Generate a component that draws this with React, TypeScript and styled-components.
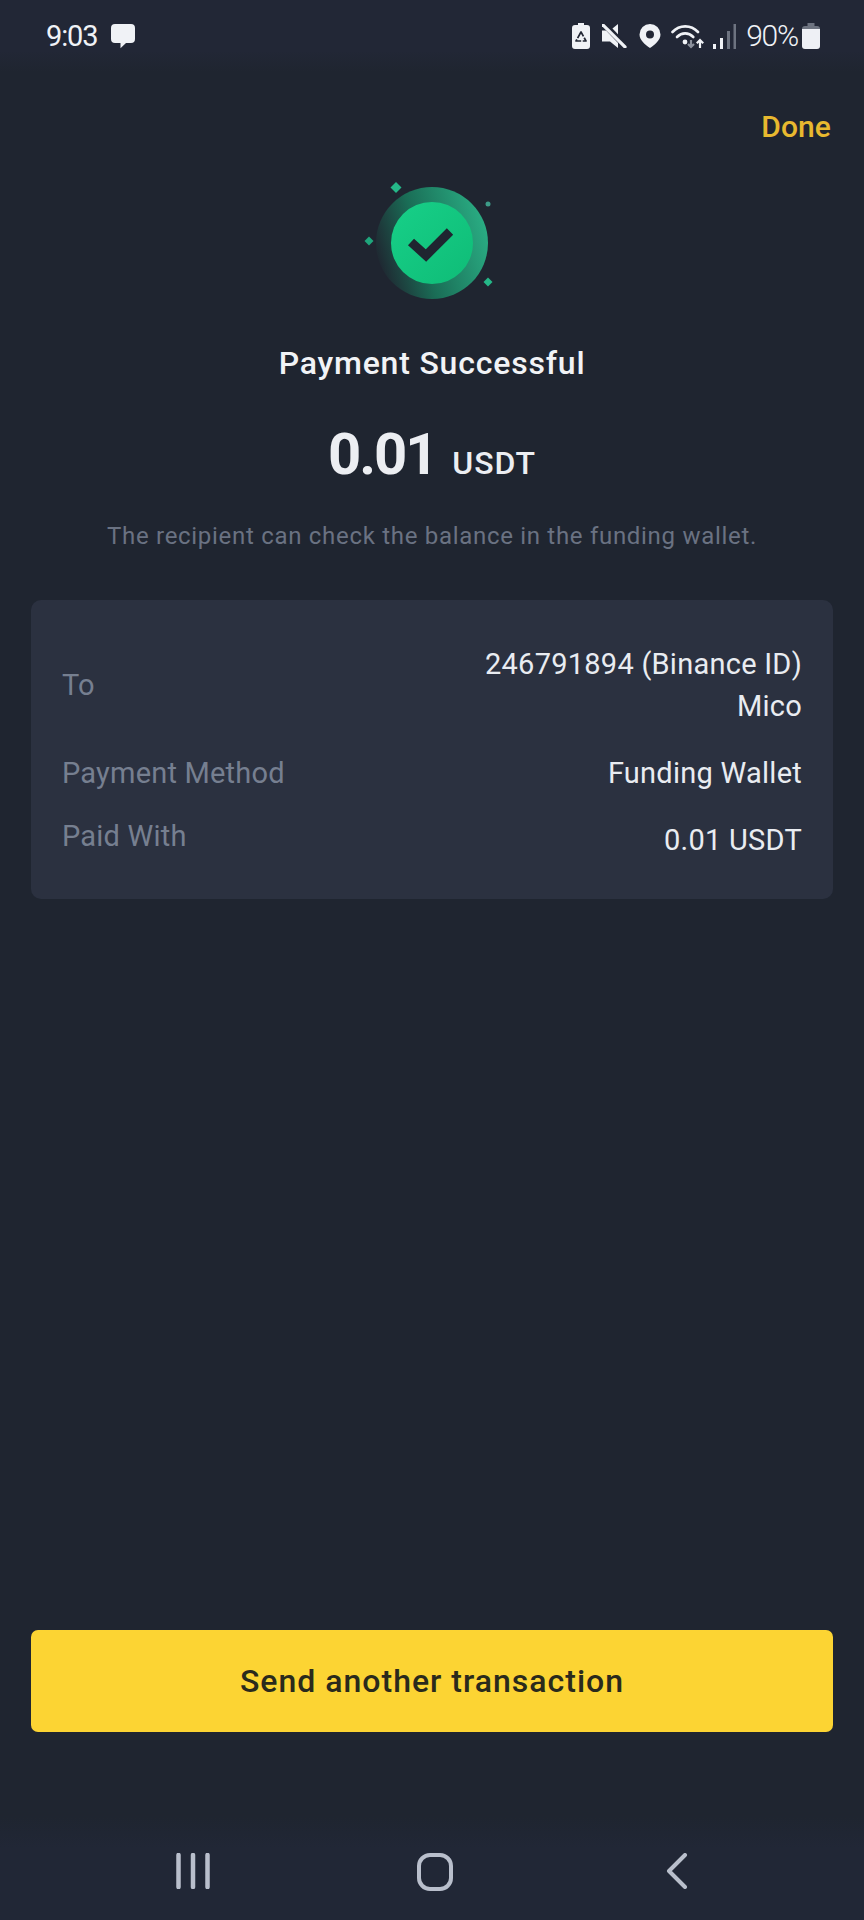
import styled, { createGlobalStyle } from 'styled-components';

const GlobalStyle = createGlobalStyle`
  html, body {
    margin: 0;
    padding: 0;
    background: #1f2530;
  }
  * {
    box-sizing: border-box;
  }
`;

const Page = styled.div`
  width: 864px;
  height: 1920px;
  display: flex;
  flex-direction: column;
  background: #1f2530;
  font-family: Roboto, 'Noto Sans', sans-serif;
  overflow: hidden;
`;

const StatusBar = styled.div`
  height: 72px;
  flex: none;
  display: flex;
  align-items: center;
  justify-content: space-between;
  padding: 17px 44px 17px 46px;
  background: linear-gradient(#222736 70%, #1f2530);
  color: #f0f2f6;
`;

const StatusGroup = styled.div`
  display: flex;
  align-items: center;
`;

const Clock = styled.span`
  font-size: 29px;
  font-weight: 400;
  letter-spacing: -1.1px;
  line-height: 38px;
  margin-right: 12px;
`;

const Percent = styled.span`
  font-size: 30px;
  font-weight: 300;
  letter-spacing: -1.2px;
  line-height: 38px;
  margin: 0 4px 0 10px;
`;

const StatusIcon = styled.svg<{ $gap?: number }>`
  display: block;
  flex: none;
  margin-left: ${(p) => p.$gap ?? 0}px;
`;

const Header = styled.div`
  height: 88px;
  flex: none;
  display: flex;
  justify-content: flex-end;
  padding: 35px 33px 0 0;
`;

const DoneLink = styled.span`
  font-size: 30px;
  font-weight: 500;
  line-height: 40px;
  letter-spacing: 0.1px;
  color: #e8b92f;
`;

const Badge = styled.svg`
  display: block;
  flex: none;
  align-self: center;
`;

const Title = styled.h1`
  margin: 33px 0 0;
  font-size: 32px;
  font-weight: 500;
  line-height: 40px;
  letter-spacing: 0.8px;
  text-align: center;
  color: #f1f3f6;
`;

const AmountLine = styled.div`
  margin-top: 36px;
  height: 70px;
  display: flex;
  justify-content: center;
  align-items: baseline;
  gap: 16px;
  color: #eceef2;
`;

const AmountValue = styled.span`
  font-size: 58px;
  font-weight: 700;
  line-height: 70px;
  letter-spacing: -2.1px;
`;

const AmountUnit = styled.span`
  font-size: 32px;
  font-weight: 500;
  letter-spacing: 0.9px;
`;

const Note = styled.p`
  margin: 29px 0 0;
  font-size: 24px;
  line-height: 36px;
  letter-spacing: 0.7px;
  text-align: center;
  color: #6a7282;
`;

const Card = styled.section`
  margin: 46px 31px 0;
  padding: 43px 31px 38px;
  border-radius: 10px;
  background: #2b3140;
  display: flex;
  flex-direction: column;
  gap: 25px;
`;

const Row = styled.div<{ $align: string }>`
  display: flex;
  justify-content: space-between;
  align-items: ${(p) => p.$align};
`;

const Label = styled.span<{ $shift?: number }>`
  font-size: 29px;
  line-height: 42px;
  letter-spacing: 0.2px;
  color: #767f90;
  margin-top: ${(p) => p.$shift ?? 0}px;
`;

const Value = styled.div`
  font-size: 29px;
  line-height: 42px;
  letter-spacing: 0.25px;
  text-align: right;
  color: #e9ecf1;
`;

const Spacer = styled.div`
  flex: 1;
`;

const PrimaryButton = styled.button`
  flex: none;
  height: 102px;
  margin: 0 31px;
  border: none;
  border-radius: 7px;
  background: #fcd433;
  font-family: inherit;
  font-size: 32px;
  font-weight: 500;
  letter-spacing: 1px;
  color: #2a2a1c;
`;

const NavBar = styled.nav`
  flex: none;
  height: 103px;
  margin-top: 85px;
  padding: 36px 0 0 6px;
  display: flex;
  justify-content: center;
  align-items: flex-start;
  gap: 183px;
  background: linear-gradient(#1f2530, #212736 30%);
`;

const NavIcon = styled.svg`
  display: block;
  flex: none;
`;

const rows = [
  { label: 'Payment Method', value: 'Funding Wallet', align: 'center', shift: 0 },
  { label: 'Paid With', value: '0.01 USDT', align: 'flex-start', shift: -4 },
];

export default function App() {
  return (
    <Page>
      <GlobalStyle />
      <StatusBar>
        <StatusGroup>
          <Clock>9:03</Clock>
          {/* message bubble */}
          <StatusIcon width="26" height="26" viewBox="0 0 26 26">
            <path
              d="M5 1h16a4 4 0 0 1 4 4v11a4 4 0 0 1-4 4h-5l-5.5 5.2V20H5a4 4 0 0 1-4-4V5a4 4 0 0 1 4-4z"
              fill="#f0f2f6"
            />
          </StatusIcon>
        </StatusGroup>
        <StatusGroup>
          {/* battery saver */}
          <StatusIcon width="20" height="26" viewBox="0 0 20 26">
            <path
              d="M7 0h6v2h3a3 3 0 0 1 3 3v18a3 3 0 0 1-3 3H4a3 3 0 0 1-3-3V5a3 3 0 0 1 3-3h3z"
              fill="#f0f2f6"
            />
            <path
              d="M10 9l-5 9h10z"
              fill="none"
              stroke="#222735"
              strokeWidth="1.7"
              strokeLinejoin="round"
              strokeDasharray="7 1.500"
            />
          </StatusIcon>
          {/* mute */}
          <StatusIcon $gap={11} width="25" height="24" viewBox="0 0 25 24">
            <path d="M16 0v24l-8-6.500H0v-11h8z" fill="#f0f2f6" />
            <path d="M2 0l23 24" stroke="#222735" strokeWidth="6" />
            <path d="M1 1l22 22" stroke="#f0f2f6" strokeWidth="3.200" strokeLinecap="round" />
          </StatusIcon>
          {/* location */}
          <StatusIcon $gap={12} width="22" height="24" viewBox="0 0 22 24">
            <path
              fillRule="evenodd"
              d="M11 0a10.500 10.500 0 0 1 10.500 10.500C21.500 16 16 20.500 11 24 6 20.500.5 16 .5 10.500A10.500 10.500 0 0 1 11 0zm0 6.500a4 4 0 1 0 0 8 4 4 0 0 0 0-8z"
              fill="#f0f2f6"
            />
          </StatusIcon>
          {/* wifi with activity arrows */}
          <StatusIcon $gap={10} width="34" height="26" viewBox="0 0 34 26">
            <g fill="none" stroke="#f0f2f6" strokeWidth="2.600" strokeLinecap="round">
              <path d="M1.500 9C8.500 1.500 20 1.500 27 9" />
              <path d="M6 14c4.800-4.800 11.500-4.800 16.300 0" />
            </g>
            <circle cx="14" cy="19" r="2.400" fill="#f0f2f6" />
            <path d="M20 17v7m-3-3l3 3 3-3" fill="none" stroke="#8b909c" strokeWidth="2.200" />
            <path d="M29 25v-8m-3.200 3.200L29 17l3.200 3.200" fill="none" stroke="#f0f2f6" strokeWidth="2.200" />
          </StatusIcon>
          {/* signal */}
          <StatusIcon $gap={8} width="23" height="25" viewBox="0 0 23 25">
            <rect x="0" y="20" width="3" height="5" fill="#f0f2f6" />
            <rect x="7" y="14" width="3" height="11" fill="#f0f2f6" />
            <rect x="14" y="7" width="3" height="18" fill="#6d7380" />
            <rect x="20.500" y="0" width="2.500" height="25" fill="#6d7380" />
          </StatusIcon>
          <Percent>90%</Percent>
          {/* battery */}
          <StatusIcon width="18" height="26" viewBox="0 0 18 26">
            <path d="M5.500 0h7v3h-7z" fill="#6d7380" />
            <path d="M3 3h12a3 3 0 0 1 3 3v2H0V6a3 3 0 0 1 3-3z" fill="#6d7380" />
            <path d="M0 6h18v17a3 3 0 0 1-3 3H3a3 3 0 0 1-3-3z" fill="#eef0f5" />
          </StatusIcon>
        </StatusGroup>
      </StatusBar>

      <Header>
        <DoneLink>Done</DoneLink>
      </Header>

      <Badge width="184" height="150" viewBox="0 0 184 150">
        <defs>
          <linearGradient id="ring" x1="0" y1="0.65" x2="1" y2="0.35">
            <stop offset="0" stopColor="#1f2530" />
            <stop offset="0.4" stopColor="#1a6d56" />
            <stop offset="1" stopColor="#2aae84" />
          </linearGradient>
          <linearGradient id="face" x1="0" y1="0" x2="1" y2="1">
            <stop offset="0" stopColor="#17d088" />
            <stop offset="1" stopColor="#0fbc77" />
          </linearGradient>
        </defs>
        <circle cx="92" cy="83" r="56" fill="url(#ring)" />
        <circle cx="92" cy="83" r="41" fill="url(#face)" />
        <path
          d="M71 82l15 13.500 24-24"
          fill="none"
          stroke="#1f2530"
          strokeWidth="9"
          strokeLinejoin="miter"
        />
        <path d="M56 22l5.500 5.500-5.500 5.500-5.500-5.500z" fill="#25b888" />
        <path d="M29 76.500l4.500 4.500-4.500 4.500-4.500-4.500z" fill="#1fa67c" />
        <path d="M148 117.500l4.500 4.500-4.500 4.500-4.500-4.500z" fill="#25b888" />
        <circle cx="148" cy="44" r="2.500" fill="#3d9c88" />
      </Badge>

      <Title>Payment Successful</Title>
      <AmountLine>
        <AmountValue>0.01</AmountValue>
        <AmountUnit>USDT</AmountUnit>
      </AmountLine>
      <Note>The recipient can check the balance in the funding wallet.</Note>

      <Card>
        <Row $align="center">
          <Label>To</Label>
          <Value>
            246791894 (Binance ID)
            <br />
            Mico
          </Value>
        </Row>
        {rows.map((row) => (
          <Row key={row.label} $align={row.align}>
            <Label $shift={row.shift}>{row.label}</Label>
            <Value>{row.value}</Value>
          </Row>
        ))}
      </Card>

      <Spacer />
      <PrimaryButton>Send another transaction</PrimaryButton>

      <NavBar>
        <NavIcon width="60" height="36" viewBox="0 0 60 36">
          <path
            d="M16.500 2v32M31 2v32M45.500 2v32"
            stroke="#b9bfcc"
            strokeWidth="4.500"
            strokeLinecap="round"
          />
        </NavIcon>
        <NavIcon width="60" height="38" viewBox="0 0 60 38">
          <rect x="14" y="2" width="32" height="34" rx="11" fill="none" stroke="#b9bfcc" strokeWidth="4" />
        </NavIcon>
        <NavIcon width="60" height="36" viewBox="0 0 60 36">
          <path
            d="M37 2L21 18l16 16"
            fill="none"
            stroke="#b9bfcc"
            strokeWidth="4"
            strokeLinecap="round"
            strokeLinejoin="round"
          />
        </NavIcon>
      </NavBar>
    </Page>
  );
}
